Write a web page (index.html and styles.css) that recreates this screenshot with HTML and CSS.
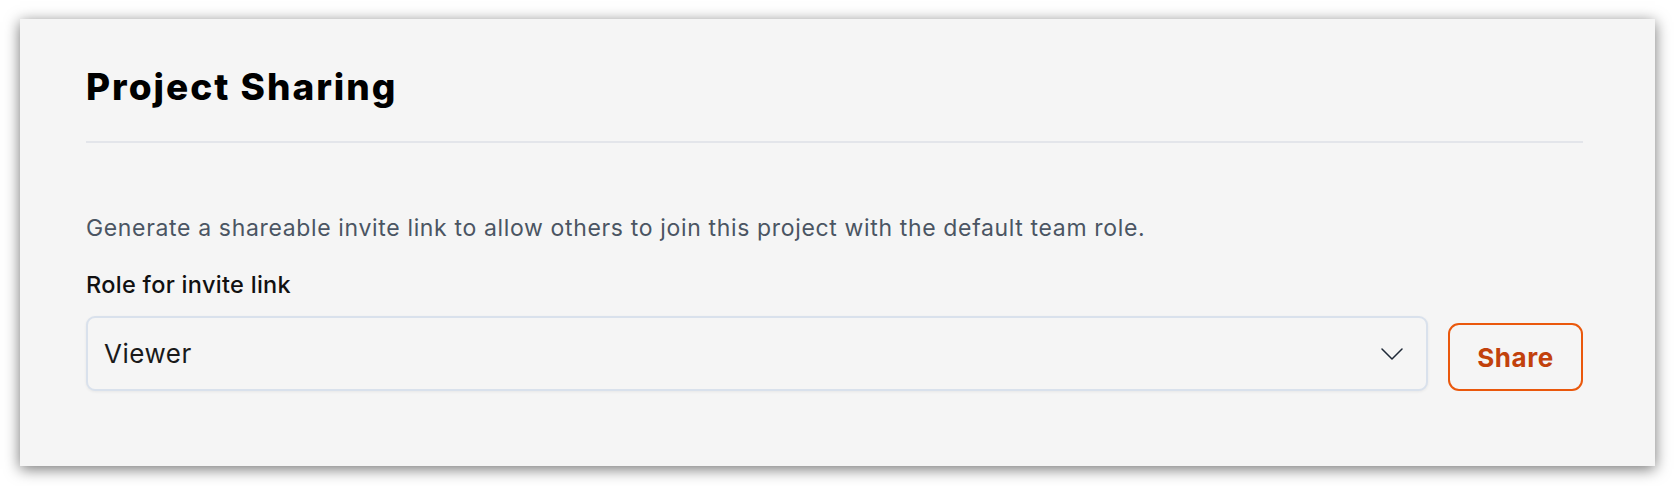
FILE: index.html
```html
<!DOCTYPE html>
<html lang="en">
<head>
<meta charset="utf-8">
<title>Project Sharing</title>
<link rel="stylesheet" href="styles.css">
</head>
<body>
<section class="panel">
  <header class="panel-head">
    <h2 class="title">Project Sharing</h2>
  </header>
  <p class="desc">Generate a shareable invite link to allow others to join this project with the default team role.</p>
  <label class="field-label" for="role">Role for invite link</label>
  <div class="row">
    <div class="select" id="role">
      <span class="select-value">Viewer</span>
      <svg class="chevron" width="22" height="12" viewBox="0 0 22 12" aria-hidden="true"><path d="M1 1 L11 11 L21 1" fill="none" stroke="#1f2937" stroke-width="1.5" stroke-linecap="round" stroke-linejoin="round"/></svg>
    </div>
    <button class="share-btn" type="button">Share</button>
  </div>
</section>
</body>
</html>
```

FILE: styles.css
```css
html, body {
  margin: 0;
  background: #ffffff;
}
body {
  padding: 19px 19px 20px 20px;
  font-family: Inter, "Noto Sans", sans-serif;
}
.panel {
  box-sizing: border-box;
  width: 1635px;
  height: 447px;
  background: #f5f5f5;
  padding: 48px 72px 0 66px;
  box-shadow: 0 3px 14px rgba(0, 0, 0, 0.55);
}
.panel-head {
  padding-bottom: 34px;
  border-bottom: 2px solid #e3e5ea;
}
.title {
  margin: 0;
  font-size: 37px;
  line-height: 40px;
  font-weight: 800;
  color: #000;
  letter-spacing: 2px;
}
.desc {
  margin: 71px 0 0 0;
  font-size: 23px;
  line-height: 28px;
  color: #4b5563;
  letter-spacing: 0.65px;
}
.field-label {
  display: block;
  margin-top: 30px;
  font-size: 23.5px;
  line-height: 26px;
  font-weight: 500;
  color: #111111;
  letter-spacing: 0.3px;
}
.row {
  display: flex;
  align-items: flex-end;
  gap: 20px;
  margin-top: 18px;
}
.select {
  flex: 1;
  box-sizing: border-box;
  height: 75px;
  border: 2px solid #d9e1ec;
  border-radius: 9px;
  background: #f5f5f5;
  box-shadow: 0 1px 3px rgba(0, 0, 0, 0.06);
  display: flex;
  align-items: center;
  justify-content: space-between;
  padding: 0 23px 0 16px;
}
.select-value {
  font-size: 26px;
  color: #1a1a1a;
  letter-spacing: 0.5px;
}
.chevron {
  display: block;
}
.share-btn {
  box-sizing: border-box;
  width: 135px;
  height: 68px;
  border: 2px solid #ea580c;
  border-radius: 11px;
  background: transparent;
  color: #c2410c;
  font-family: Inter, "Noto Sans", sans-serif;
  font-size: 26px;
  font-weight: 700;
  letter-spacing: 0.6px;
  padding: 0;
}
```
